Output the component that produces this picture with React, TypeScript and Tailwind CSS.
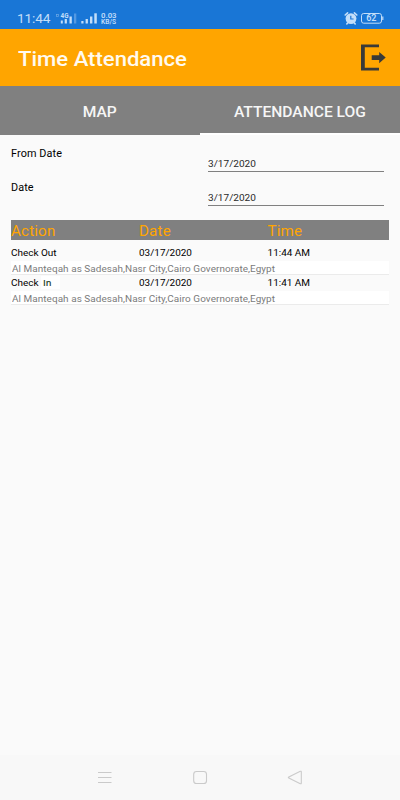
import React from "react";

const stretch = "inline-block origin-left scale-x-[1.083] whitespace-nowrap";

function StatusBar() {
  return (
    <div className="flex h-[28.5px] items-start bg-[#1976d6] text-[#c3def9]">
      <span className={`${stretch} ml-[17px] mt-[10px] w-[38px] text-[12.6px] leading-[18px] tracking-[-0.1px]`}>11:44</span>
      <svg className="mt-[11px]" width="64" height="15" viewBox="55 11 64 15" fill="currentColor">
        <rect x="56.5" y="14.5" width="2" height="2" fill="none" stroke="currentColor" strokeWidth=".7" opacity=".5" />
        <text x="60.5" y="17.8" fontSize="6.500" fontWeight="700" fontFamily="Roboto, sans-serif" textLength="8" lengthAdjust="spacingAndGlyphs">4G</text>
        <rect x="60.8" y="20.5" width="2" height="3" />
        <rect x="64.7" y="19" width="2.2" height="4.5" />
        <rect x="69.5" y="16.5" width="2.3" height="7" />
        <rect x="74" y="13.5" width="2.3" height="10" opacity=".35" />
        <rect x="81.3" y="21" width="2.2" height="2.5" />
        <rect x="85.6" y="19" width="2.3" height="4.5" />
        <rect x="90" y="16.5" width="2.4" height="7" />
        <rect x="94.3" y="13.3" width="2.5" height="10.2" />
        <g fontWeight="600" fontFamily="Roboto, sans-serif">
          <text x="101" y="17.9" fontSize="7" textLength="15.5" lengthAdjust="spacingAndGlyphs">0.03</text>
          <text x="101" y="24" fontSize="6.5" textLength="15" lengthAdjust="spacingAndGlyphs">KB/S</text>
        </g>
      </svg>
      <svg className="ml-auto mr-[14px] mt-[10px]" width="42" height="16" viewBox="344 10 42 16">
        <circle cx="351" cy="18.600" r="5.400" fill="currentColor" />
        <path d="M345.200 15l2.400-2.200M356.800 15l-2.400-2.200M347.6 23l-.8 1M354.4 23l.8 1" stroke="currentColor" strokeWidth="1.6" strokeLinecap="round" />
        <path d="M350.8 15.8v3.2h2.8" stroke="#1976d6" strokeWidth="1.2" fill="none" />
        <rect x="361.5" y="13.5" width="20" height="9.7" rx="2.2" fill="none" stroke="currentColor" />
        <path d="M382.8 16.5v3.5" stroke="currentColor" strokeWidth="1.2" />
        <text x="366.2" y="21.4" fontSize="8.500" fontWeight="600" fill="currentColor" fontFamily="Roboto, sans-serif" textLength="10.3" lengthAdjust="spacingAndGlyphs">62</text>
      </svg>
    </div>
  );
}

function AppBar() {
  return (
    <header className="flex h-[57.5px] items-center justify-between bg-[#ffa500] pl-[18px] pr-[14px] text-[#fffaf0]">
      <h1 className={`${stretch} pt-[3px] text-[20.4px] font-medium leading-[28px]`}>Time Attendance</h1>
      <svg className="mt-[1.5px]" width="26" height="28" viewBox="360 44 26 28" fill="#3a3a38">
        <path d="M361 44.5h18v2.800h-14.200v20.400h14.200v2.800h-18z" />
        <path d="M371.7 55.200h7.500v-3.200l6.500 5.600-6.500 5.600v-3.200h-7.500z" />
      </svg>
    </header>
  );
}

function Tabs() {
  return (
    <nav className="flex h-[49px] bg-[#808080] text-center text-[14.4px] font-medium leading-[53px] text-[#f6f6f6]">
      <div className="flex-1">
        <span className="inline-block scale-x-[1.083]">MAP</span>
      </div>
      <div className="flex-1 border-b-2 border-white">
        <span className="inline-block scale-x-[1.083]">ATTENDANCE LOG</span>
      </div>
    </nav>
  );
}

function DateField({ label, value }: { label: string; value: string }) {
  return (
    <div className="flex h-[34px] justify-between pr-[5px]">
      <label className={`${stretch} pt-px text-[10px] leading-[14px] tracking-[0.1px]`}>{label}</label>
      <div className="mt-[10px] h-[16px] w-[176px] border-b border-[#808080] text-[9.3px] leading-[15px] text-[#2a2a2a]">
        <span className={stretch}>{value}</span>
      </div>
    </div>
  );
}

function Entry({ action, time }: { action: React.ReactNode; time: string }) {
  return (
    <li className="h-[30px]">
      <div className="grid h-[13px] grid-cols-[128px_128px_1fr] text-[9.2px] leading-[14px]">
        <div>{action}</div>
        <div><span className={stretch}>03/17/2020</span></div>
        <div><span className={`${stretch} pl-[0.5px]`}>{time}</span></div>
      </div>
      <div className="mt-[2px] h-[14px] border-b border-[#ebebeb] bg-white pl-px text-[9.2px] leading-[15px] tracking-[0.05px] text-[#7b7b7b]">
        <span className={stretch}>Al Manteqah as Sadesah,Nasr City,Cairo Governorate,Egypt</span>
      </div>
    </li>
  );
}

function NavBar() {
  return (
    <footer className="flex h-[45px] items-center justify-center bg-[#f8f8f8]">
      <svg width="210" height="21" viewBox="95 767 210 21" fill="none" stroke="#cacaca" strokeWidth="1.1">
        <path d="M98 772.5h13.5M98 777.5h13.5M98 782.5h13.5" />
        <rect x="193.7" y="771.5" width="12.8" height="12" rx="2.8" />
        <path d="M300.3 771.3q1-.4 1 .7v11q0 1.100-1 .7l-11.500-5.600q-1-.6 0-1.200z" />
      </svg>
    </footer>
  );
}

export default function App() {
  return (
    <div className="flex h-[800px] w-[400px] flex-col overflow-hidden bg-[#fafafa] font-['Roboto',sans-serif] text-black">
      <StatusBar />
      <AppBar />
      <Tabs />
      <main className="flex-1 px-[11px] pt-[11px]">
        <DateField label="From Date" value="3/17/2020" />
        <DateField label="Date" value="3/17/2020" />
        <div className="mt-[6px] grid h-[20px] grid-cols-[128px_128px_1fr] bg-[#808080] text-[14px] leading-[22px] tracking-[0.15px] text-[#ffa500]">
          <div><span className={stretch}>Action</span></div>
          <div><span className={stretch}>Date</span></div>
          <div><span className={`${stretch} pl-[0.5px]`}>Time</span></div>
        </div>
        <ul className="mt-[6px]">
          <Entry action={<span className={stretch}>Check Out</span>} time="11:44 AM" />
          <Entry
            action={
              <div className="flex">
                <span className={`${stretch} w-[30px]`}>Check</span>
                <span className="h-[13px] w-[19px] bg-white pl-[2px] font-['Open_Sans',sans-serif] text-[9px] font-semibold leading-[14px] text-[#1d3f2a]">In</span>
              </div>
            }
            time="11:41 AM"
          />
        </ul>
      </main>
      <NavBar />
    </div>
  );
}
